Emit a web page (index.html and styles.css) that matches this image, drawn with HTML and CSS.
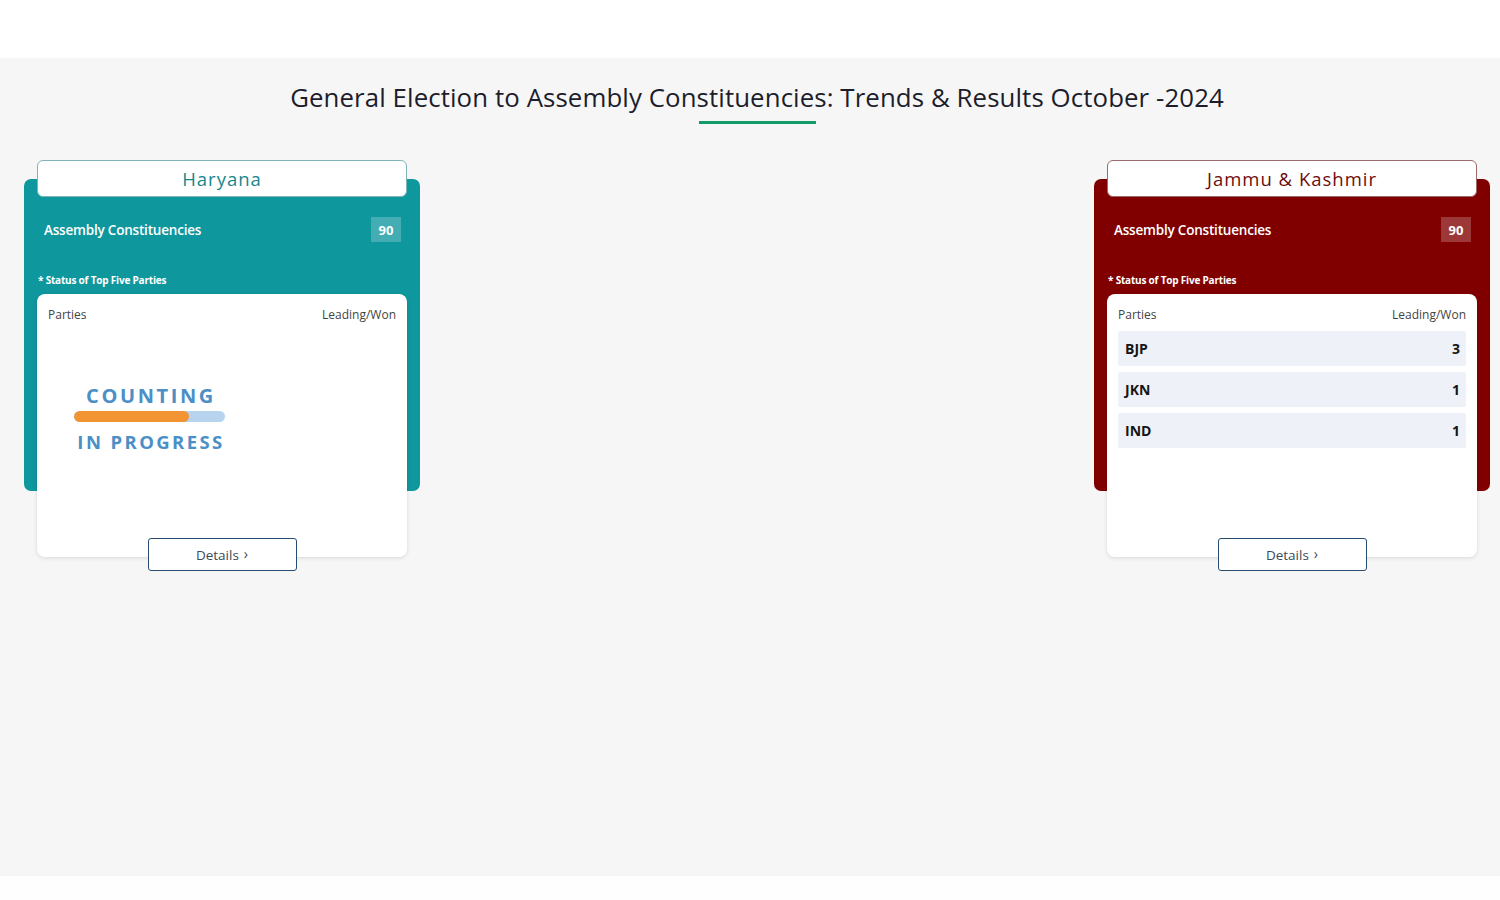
FILE: index.html
```html
<!DOCTYPE html>
<html lang="en">
<head>
<meta charset="utf-8">
<title>General Election Trends &amp; Results</title>
<link rel="stylesheet" href="styles.css">
</head>
<body>
<header class="topbar"></header>
<main class="main">
  <h1 class="title">General Election to Assembly Constituencies: Trends &amp; Results October -2024</h1>
  <div class="title-line"></div>
  <section class="cards">
    <article class="card card-teal">
      <div class="card-head">Haryana</div>
      <div class="ac-row">
        <span class="ac-label">Assembly Constituencies</span>
        <span class="ac-badge">90</span>
      </div>
      <div class="status-note">* Status of Top Five Parties</div>
      <div class="panel">
        <div class="panel-head"><span>Parties</span><span>Leading/Won</span></div>
        <div class="counting">
          <div class="counting-top">COUNTING</div>
          <div class="counting-bar"><div class="counting-fill"></div></div>
          <div class="counting-bottom">IN PROGRESS</div>
        </div>
        <button class="details-btn">Details <span class="chev">›</span></button>
      </div>
    </article>

    <article class="card card-maroon">
      <div class="card-head">Jammu &amp; Kashmir</div>
      <div class="ac-row">
        <span class="ac-label">Assembly Constituencies</span>
        <span class="ac-badge">90</span>
      </div>
      <div class="status-note">* Status of Top Five Parties</div>
      <div class="panel">
        <div class="panel-head"><span>Parties</span><span>Leading/Won</span></div>
        <div class="party-list">
          <div class="party-row"><span>BJP</span><span>3</span></div>
          <div class="party-row"><span>JKN</span><span>1</span></div>
          <div class="party-row"><span>IND</span><span>1</span></div>
        </div>
        <button class="details-btn">Details <span class="chev">›</span></button>
      </div>
    </article>
  </section>
</main>
<footer class="bottombar"></footer>
</body>
</html>
```

FILE: styles.css
```css
* { box-sizing: border-box; }
html, body { margin: 0; padding: 0; }
body {
  font-family: "Open Sans", "Liberation Sans", sans-serif;
  background: #ffffff;
  color: #222;
  width: 1500px;
  height: 900px;
  overflow: hidden;
}
.topbar { height: 58px; background: #ffffff; }
.main {
  height: 818px;
  background: #f6f6f7;
  display: flex;
  flex-direction: column;
  align-items: center;
  padding-top: 22px;
}
.bottombar { height: 24px; background: #fefefe; }

.title {
  margin: 0;
  font-size: 25.8px;
  font-weight: 400;
  color: #1d1d2b;
  line-height: 34px;
  letter-spacing: 0.1px;
  margin-left: 14px;
}
.title-line {
  width: 117px;
  height: 3px;
  background: #129a68;
  margin-top: 7px;
  margin-left: 15px;
}

.cards {
  align-self: stretch;
  display: flex;
  justify-content: space-between;
  padding: 0 10px 0 24px;
  margin-top: 55px;
}
.card {
  width: 396px;
  height: 312px;
  border-radius: 7px;
  padding: 0 13px;
  display: flex;
  flex-direction: column;
}
.card > * { flex-shrink: 0; }
.card-teal { background: #0f979e; }
.card-maroon { background: #800000; }

.card-head {
  margin-top: -19px;
  height: 37px;
  width: 370px;
  background: #fff;
  border-radius: 6px;
  border: 1px solid #8cb8bc;
  display: flex;
  align-items: center;
  justify-content: center;
  font-size: 18.5px;
  letter-spacing: 1px;
}
.card-teal .card-head { color: #16878d; border-color: #7fb5b9; }
.card-maroon .card-head { color: #6e0c0c; border-color: #9c6a6a; }

.ac-row {
  display: flex;
  justify-content: space-between;
  align-items: center;
  margin-top: 20px;
  padding: 0 6px 0 7px;
  height: 25px;
}
.ac-label {
  color: #fff;
  font-size: 13.5px;
  font-weight: 600;
  letter-spacing: -0.2px;
}
.ac-badge {
  width: 30px;
  height: 25px;
  background: rgba(255,255,255,0.22);
  color: #fff;
  font-size: 13px;
  font-weight: 700;
  display: flex;
  align-items: center;
  justify-content: center;
}
.status-note {
  color: #fff;
  font-size: 10px;
  font-weight: 700;
  margin-top: 32px;
  margin-left: 1px;
  letter-spacing: -0.2px;
  line-height: 12px;
}
.panel {
  margin-top: 8px;
  width: 370px;
  height: 263px;
  background: #fff;
  border-radius: 8px;
  box-shadow: 0 1px 4px rgba(0,0,0,0.12);
  display: flex;
  flex-direction: column;
  padding: 12px 11px 0 11px;
}
.panel-head {
  display: flex;
  justify-content: space-between;
  font-size: 12px;
  color: #444;
  line-height: 18px;
}
.party-list {
  display: flex;
  flex-direction: column;
  gap: 6px;
  margin-top: 7px;
}
.party-row {
  height: 35px;
  background: #eef2f8;
  display: flex;
  justify-content: space-between;
  align-items: center;
  padding: 0 6px 0 7px;
  font-size: 14px;
  font-weight: 700;
  color: #151515;
  border-radius: 2px;
}

.counting {
  width: 151px;
  margin-top: 60px;
  margin-left: 26px;
  display: flex;
  flex-direction: column;
  align-items: center;
}
.counting-top, .counting-bottom {
  font-family: "Open Sans", "Liberation Sans", sans-serif;
  font-weight: 700;
  color: #4b8fc6;
  font-size: 20px;
  letter-spacing: 2.6px;
  line-height: 24px;
  white-space: nowrap;
}
.counting-top { margin-right: -3px; }
.counting-bottom { font-size: 18.5px; letter-spacing: 2.4px; margin-right: -3px; margin-top: 1px; }
.counting-bar {
  width: 151px;
  height: 11px;
  border-radius: 6px;
  background: #b8d3ee;
  margin: 3px 0 7px;
  overflow: hidden;
}
.counting-fill {
  width: 115px;
  height: 100%;
  background: #f39433;
  border-radius: 6px;
}

.details-btn {
  margin-top: auto;
  margin-bottom: -14px;
  align-self: center;
  width: 149px;
  height: 33px;
  background: #fff;
  border: 1.5px solid #264d70;
  border-radius: 3px;
  font-family: "Open Sans", "Liberation Sans", sans-serif;
  font-size: 13.5px;
  color: #3b4a5a;
  display: flex;
  align-items: center;
  justify-content: center;
  gap: 5px;
  padding: 0;
}
.chev { font-size: 14px; line-height: 1; margin-top: -2px; }
```
